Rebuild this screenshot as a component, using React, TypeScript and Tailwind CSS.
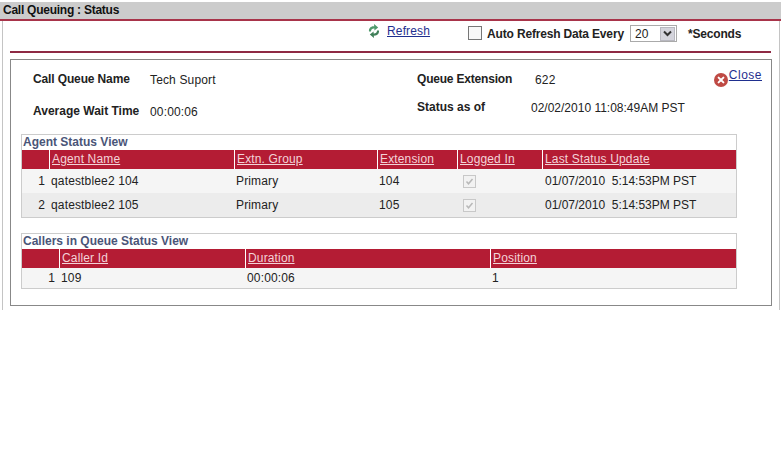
import React from "react";

const font = { fontFamily: '"Liberation Sans", Arial, sans-serif' };

function RefreshIcon() {
  return (
    <svg width="16" height="16" viewBox="0 0 16 16" className="block">
      <path d="M3 8.5C2.6 5.2 5 3 8.2 3.4L8 1l4.2 3.4L8.4 7.6V5.5C6.4 5.3 5 6.4 5 8.5Z" fill="#4f9a6c" />
      <path d="M13 7.5c.4 3.3-2 5.5-5.2 5.1l.2 2.4-4.2-3.4 3.8-3.2v2.1c2 .2 3.4-.9 3.4-3Z" fill="#3f7f58" />
    </svg>
  );
}

function CloseIcon() {
  return (
    <svg width="14" height="14" viewBox="0 0 14 14" className="block">
      <circle cx="7" cy="7" r="7" fill="#bf4a44" />
      <path d="M4.6 4.6 9.4 9.4M9.4 4.6 4.6 9.4" stroke="#fff" strokeWidth="2" strokeLinecap="round" />
    </svg>
  );
}

function DisabledCheck() {
  return (
    <div className="w-[13px] h-[13px] border border-[#c8c8c8] bg-[#f2f2f2] flex items-center justify-center">
      <svg width="9" height="9" viewBox="0 0 9 9">
        <path d="M1.5 4.5 3.5 6.8 7.5 2" fill="none" stroke="#b8b8b8" strokeWidth="1.5" />
      </svg>
    </div>
  );
}

function HeaderCell({ label, width }: { label?: string; width: string }) {
  return (
    <div className={`${width} h-full pl-[2px] border-r border-white last:border-r-0 text-[#f3d3d8] underline leading-[19px]`}>
      {label}
    </div>
  );
}

export default function App() {
  return (
    <div className="w-[781px] h-[450px] bg-white text-[12px] text-[#222] tracking-[0.15px] overflow-hidden pt-[2px]" style={font}>
      <div className="h-[19px] bg-[#cccccc] border-b-2 border-[#a8344a] pl-[3px] font-bold text-[12px] tracking-[-0.25px] leading-[16px] text-[#111]">
        Call Queuing : Status
      </div>
      <div className="w-[778px] ml-[2px] h-[289px] border-x border-[#c4c4c4] pt-[1px]">
        <div className="h-[31px] ml-[7px] mr-[8px] border-b-2 border-[#8e2a44] flex items-start">
          <div className="ml-[356px] mt-[1px]"><RefreshIcon /></div>
          <a className="ml-[5px] mt-[2px] text-[#1f2f8f] underline leading-[14px]">Refresh</a>
          <div className="ml-[38px] mt-[4px] w-[14px] h-[14px] border border-[#777] bg-[#f8f8f8]" />
          <span className="ml-[5px] mt-[5px] font-bold tracking-[-0.17px] leading-[14px]">Auto Refresh Data Every</span>
          <div className="ml-[6px] mt-[3px] w-[47px] h-[17px] border border-[#aaa] flex items-center justify-between pl-[4px] pr-[1px]">
            <span className="leading-[14px]">20</span>
            <div className="w-[15px] h-[14px] bg-[#d4d4dc] border border-[#b8b8c0] flex items-center justify-center">
              <svg width="9" height="7" viewBox="0 0 9 7"><path d="M1 1.5 4.5 5 8 1.5" fill="none" stroke="#333" strokeWidth="2" /></svg>
            </div>
          </div>
          <span className="ml-[11px] mt-[5px] font-bold tracking-[-0.17px] leading-[14px]">*Seconds</span>
        </div>

        <div className="ml-[7px] mt-[6px] w-[762px] h-[247px] border border-[#888] pl-[10px] relative">
          <div className="h-[74px] pt-[12px] pl-[12px]">
            <div className="flex h-[14px] items-start">
              <span className="w-[117px] font-bold tracking-[-0.13px] leading-[14px]">Call Queue Name</span>
              <span className="w-[267px] leading-[16px]">Tech Suport</span>
              <span className="w-[114px] font-bold tracking-[-0.2px] leading-[14px]">Queue Extension</span>
              <span className="ml-[4px] leading-[16px]">622</span>
            </div>
            <div className="flex h-[14px] mt-[18px] items-start">
              <span className="w-[117px] font-bold tracking-[0px] leading-[14px]">Average Wait Time</span>
              <span className="w-[267px] leading-[16px]">00:00:06</span>
              <span className="w-[114px] font-bold tracking-[0px] leading-[14px] -mt-[4px]">Status as of</span>
              <span className="tracking-[0px] leading-[14px] -mt-[3px]">02/02/2010 11:08:49AM PST</span>
            </div>
          </div>
          <div className="absolute right-[9px] top-[8px] flex items-start">
            <div className="mt-[5px] mr-[1px]"><CloseIcon /></div>
            <a className="text-[#1f2f8f] underline tracking-[0.5px] leading-[14px]">Close</a>
          </div>

          <div className="w-[716px] h-[84px] border border-[#ccc]">
            <div className="h-[15px] pl-[1px] font-bold tracking-[0px] text-[#4a5578] leading-[15px]">Agent Status View</div>
            <div className="h-[19px] bg-[#b41c34] flex">
              <HeaderCell width="w-[28px]" />
              <HeaderCell width="w-[185px]" label="Agent Name" />
              <HeaderCell width="w-[143px]" label="Extn. Group" />
              <HeaderCell width="w-[80px]" label="Extension" />
              <HeaderCell width="w-[85px]" label="Logged In" />
              <HeaderCell width="flex-1" label="Last Status Update" />
            </div>
            {[
              { n: 1, name: "qatestblee2 104", ext: "104", bg: "bg-[#f5f5f5]" },
              { n: 2, name: "qatestblee2 105", ext: "105", bg: "bg-[#ececec]" },
            ].map((r) => (
              <div key={r.n} className={`${r.bg} h-[24px] flex items-center leading-[14px]`}>
                <div className="w-[28px] text-right pr-[5px]">{r.n}</div>
                <div className="w-[185px] pl-[1px]">{r.name}</div>
                <div className="w-[143px] pl-[1px]">Primary</div>
                <div className="w-[80px] pl-[1px]">{r.ext}</div>
                <div className="w-[85px] pl-[5px]"><DisabledCheck /></div>
                <div className="flex-1 pl-[2px] tracking-[0px] whitespace-pre">01/07/2010  5:14:53PM PST</div>
              </div>
            ))}
          </div>

          <div className="mt-[15px] w-[716px] h-[56px] border border-[#ccc]">
            <div className="h-[15px] pl-[1px] font-bold tracking-[0px] text-[#4a5578] leading-[15px]">Callers in Queue Status View</div>
            <div className="h-[19px] bg-[#b41c34] flex">
              <HeaderCell width="w-[38px]" />
              <HeaderCell width="w-[186px]" label="Caller Id" />
              <HeaderCell width="w-[245px]" label="Duration" />
              <HeaderCell width="flex-1" label="Position" />
            </div>
            <div className="h-[20px] bg-[#f5f5f5] flex items-center leading-[14px]">
              <div className="w-[38px] text-right pr-[5px]">1</div>
              <div className="w-[186px] pl-[1px]">109</div>
              <div className="w-[245px] pl-[1px]">00:00:06</div>
              <div className="flex-1 pl-[1px]">1</div>
            </div>
          </div>
        </div>
      </div>
    </div>
  );
}
